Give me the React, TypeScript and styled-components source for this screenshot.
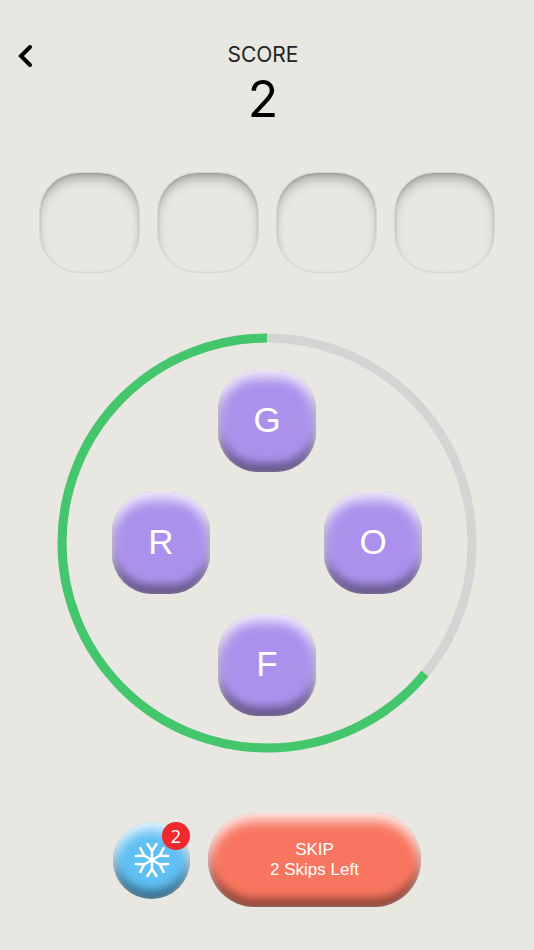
import React from "react";
import styled, { createGlobalStyle } from "styled-components";

const GlobalStyle = createGlobalStyle`
  * { box-sizing: border-box; }
  body {
    margin: 0;
    background: #e8e7e1;
    color: #000;
    font-family: "Liberation Sans", Arial, sans-serif;
  }
  button { border: 0; font-family: inherit; cursor: pointer; }
`;

const Page = styled.main`
  min-height: 100vh;
  padding: 40px 16px;
  display: flex;
  flex-direction: column;
  align-items: center;
`;

const Header = styled.header`
  width: 100%;
  display: grid;
  grid-template-columns: 20px 1fr 28px;
  align-items: start;
`;

const BackButton = styled.button`
  height: 32px;
  padding: 0;
  background: none;
  display: flex;
  align-items: center;
  justify-content: center;
`;

const Score = styled.div`
  font-family: Inter, sans-serif;
  text-align: center;
`;

const ScoreLabel = styled.div`
  color: #222;
  font-size: 21px;
  line-height: 30px;
  font-weight: 400;
`;

const ScoreValue = styled.div`
  font-size: 50px;
  line-height: 58px;
  font-weight: 400;
`;

const Slots = styled.div`
  width: 100%;
  max-width: 560px;
  margin-top: 44px;
  padding: 0 23px;
  display: grid;
  grid-template-columns: repeat(4, 1fr);
  gap: 17px;
`;

const Slot = styled.div`
  aspect-ratio: 1;
  border-radius: 40px;
  border: 1px solid #d6d6d4;
  box-shadow: inset 0 8px 12px -3px rgba(0, 0, 0, 0.3), inset 0 1px 3px rgba(0, 0, 0, 0.14);
`;

const Dial = styled.section`
  width: 100%;
  max-width: 420px;
  aspect-ratio: 1;
  margin-top: 60px;
  display: grid;
  place-items: center;
  > * { grid-area: 1 / 1; }
`;

const Ring = styled.svg`
  width: 100%;
  height: 100%;
`;

const Letters = styled.div`
  display: grid;
  grid-template-columns: repeat(3, 98px);
  grid-template-areas: ". top ." "left . right" ". bottom .";
  column-gap: 8px;
  row-gap: 20px;
`;

const raised = `
  box-shadow:
    inset 0 8px 12px rgba(255, 255, 255, 0.8),
    inset 0 -9px 8px rgba(0, 0, 0, 0.4),
    inset 0 0 4px rgba(190, 190, 190, 0.7);
`;

const LetterButton = styled.button<{ $area: string }>`
  grid-area: ${(p) => p.$area};
  height: 102px;
  padding: 0 0 2px;
  border-radius: 40px;
  background: #ab91ec;
  color: #fff;
  font-size: 35px;
  line-height: 40px;
  ${raised}
`;

const Actions = styled.footer`
  margin-top: 60px;
  display: flex;
  align-items: center;
  gap: 18px;
`;

const FreezeButton = styled.button`
  position: relative;
  width: 77px;
  height: 77px;
  padding: 0;
  border-radius: 50%;
  background: #60bff3;
  display: grid;
  place-items: center;
  ${raised}
`;

const Badge = styled.span`
  position: absolute;
  top: 0;
  right: 0;
  width: 28px;
  height: 28px;
  border-radius: 50%;
  background: #ee2a2f;
  color: #fff;
  font-family: "Open Sans", sans-serif;
  font-size: 18px;
  line-height: 28px;
`;

const SkipButton = styled.button`
  width: 213px;
  height: 94px;
  padding: 0;
  border-radius: 47px;
  background: #f87660;
  color: #fff;
  font-size: 17px;
  line-height: 20px;
  ${raised}
`;

const SkipLine = styled.span`
  display: block;
`;

const letters = [
  { area: "top", letter: "G" },
  { area: "left", letter: "R" },
  { area: "right", letter: "O" },
  { area: "bottom", letter: "F" },
];

const Snowflake = () => (
  <svg width="38" height="38" viewBox="-19 -19 38 38" fill="none" stroke="#fff" strokeWidth="2.5" strokeLinecap="round" aria-hidden="true">
    {[0, 60, 120, 180, 240, 300].map((angle) => (
      <path key={angle} transform={`rotate(${angle})`} d="M0 0V-9M-4.5 -16L0 -9L4.5 -16" />
    ))}
  </svg>
);

export default function App() {
  return (
    <>
      <GlobalStyle />
      <Page>
        <Header>
          <BackButton aria-label="Back">
            <svg width="20" height="28" viewBox="0 0 20 28" fill="none" stroke="#000" strokeWidth="4" strokeLinecap="round" aria-hidden="true">
              <path d="M14 5L5 14L14 23" />
            </svg>
          </BackButton>
          <Score>
            <ScoreLabel>SCORE</ScoreLabel>
            <ScoreValue>2</ScoreValue>
          </Score>
        </Header>
        <Slots>
          {[0, 1, 2, 3].map((i) => (
            <Slot key={i} />
          ))}
        </Slots>
        <Dial>
          <Ring viewBox="0 0 420 420" fill="none" strokeWidth="9" aria-hidden="true">
            <circle cx="210" cy="210" r="205" stroke="#d4d4d4" />
            <circle
              cx="210"
              cy="210"
              r="205"
              stroke="#43c66c"
              pathLength="1000"
              strokeDasharray="640 1000"
              transform="rotate(-90 210 210) matrix(1 0 0 -1 0 420)"
            />
          </Ring>
          <Letters>
            {letters.map(({ area, letter }) => (
              <LetterButton key={area} $area={area}>
                {letter}
              </LetterButton>
            ))}
          </Letters>
        </Dial>
        <Actions>
          <FreezeButton aria-label="Freeze, 2 left">
            <Snowflake />
            <Badge>2</Badge>
          </FreezeButton>
          <SkipButton>
            <SkipLine>SKIP</SkipLine>
            <SkipLine>2 Skips Left</SkipLine>
          </SkipButton>
        </Actions>
      </Page>
    </>
  );
}
